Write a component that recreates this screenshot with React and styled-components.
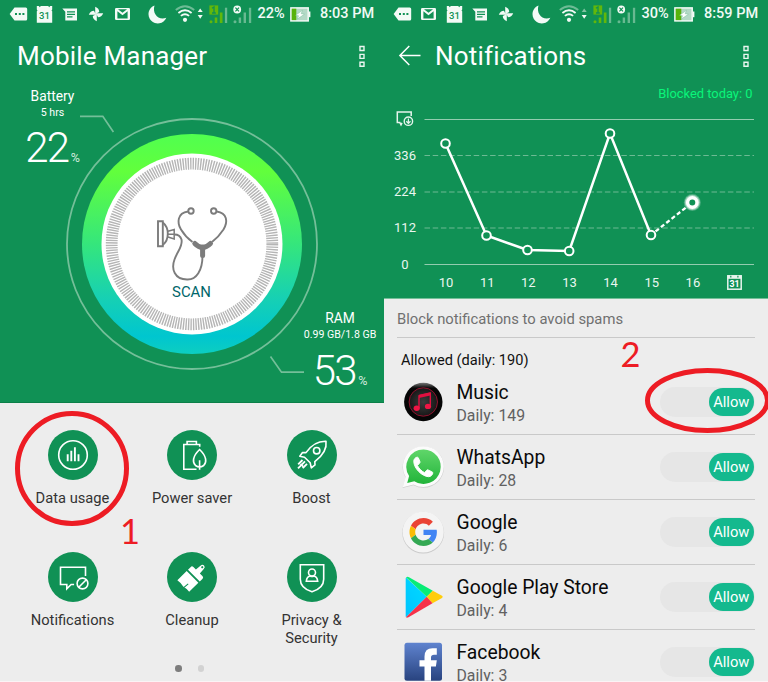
import React from "react";
import styled, { createGlobalStyle } from "styled-components";

const GREEN = "#109155";

const GlobalStyle = createGlobalStyle`
  * { box-sizing: border-box; }
  body { margin: 0; background: #ededed; font-family: Roboto, sans-serif; overflow: hidden; }
  svg { display: block; flex: none; overflow: visible; }
`;

const Page = styled.main`
  position: relative;
  display: grid;
  grid-template-columns: 384px 384px;
  width: 768px;
  height: 682px;
  overflow: hidden;
  background: #ededed;
  border-bottom: 1px solid #fbf3f5;
`;

const Phone = styled.section`
  display: flex;
  flex-direction: column;
  min-width: 0;
  height: 681px;
  overflow: hidden;
`;

const Header = styled.header`
  flex: none;
  height: ${(p) => p.$height}px;
  background: ${GREEN};
  color: #fff;
  border-bottom: 1px solid ${(p) => p.$edge};
`;

const StatusBar = styled.div`
  display: flex;
  align-items: center;
  height: 28px;
  padding: 0 0 0 6px;
  font-size: 14.5px;
  font-weight: 500;
  color: #f1faf5;
`;

const Tray = styled.div`
  display: flex;
  margin-right: 13px;
`;

const TraySlot = styled.span`
  display: flex;
  align-items: center;
  justify-content: center;
  width: 25.8px;
`;

const Radios = styled.div`
  display: flex;
  align-items: center;
  gap: 5.5px;
`;

const MoonSlot = styled.span`
  width: 22px;
`;

const StatusText = styled.span`
  white-space: nowrap;
  line-height: 28px;
  width: ${(p) => p.$width}px;
  margin-left: ${(p) => p.$gap}px;
`;

const TitleBar = styled.div`
  display: flex;
  align-items: center;
  height: 56px;
  padding: 0 19px 0 ${(p) => p.$left}px;
`;

const Title = styled.h1`
  flex: 1;
  margin: 0;
  font-size: 26px;
  font-weight: 400;
  line-height: 57px;
  letter-spacing: 0.2px;
`;

const BackSlot = styled.span`
  width: 36.5px;
`;

const Hero = styled.div`
  display: grid;
  height: 318px;
  & > * { grid-area: 1 / 1; }
`;

const Gauge = styled.div`
  display: flex;
  flex-direction: column;
  align-items: center;
  width: ${(p) => p.$width}px;
  height: 80px;
  justify-self: ${(p) => p.$side};
  align-self: ${(p) => p.$side};
  margin: ${(p) => p.$margin};
`;

const GaugeName = styled.div`
  font-size: 13.8px;
  line-height: 18px;
  white-space: nowrap;
`;

const GaugeNote = styled.div`
  font-size: 10.6px;
  line-height: 16px;
  white-space: nowrap;
`;

const GaugeValue = styled.div`
  display: flex;
  align-items: baseline;
  margin-top: ${(p) => p.$drop}px;
  font-size: 42px;
  font-weight: 300;
  line-height: 42px;
  letter-spacing: -1.8px;
`;

const Percent = styled.span`
  margin-left: 2.5px;
  font-size: 12.5px;
  font-weight: 400;
  letter-spacing: 0;
  color: #d3ecdf;
`;

const Tools = styled.nav`
  display: grid;
  grid-template-columns: repeat(3, 119.5px);
  grid-auto-rows: 122px;
  padding: 27px 0 0 12.75px;
`;

const Tool = styled.div`
  display: flex;
  flex-direction: column;
  align-items: center;
`;

const ToolDisc = styled.span`
  display: flex;
  align-items: center;
  justify-content: center;
  width: 50px;
  height: 50px;
  border-radius: 50%;
  background: ${GREEN};
`;

const ToolLabel = styled.span`
  margin-top: 10px;
  max-width: 100px;
  font-size: 14.7px;
  line-height: 17.6px;
  text-align: center;
  color: #333;
`;

const Pager = styled.div`
  display: flex;
  gap: 16px;
  padding: 0 0 0 175px;
  margin-top: -9px;
`;

const Dot = styled.i`
  width: 6.5px;
  height: 6.5px;
  border-radius: 50%;
  background: ${(p) => (p.$active ? "#7d7d7d" : "#d2d2d2")};
`;

const Blocked = styled.div`
  height: 20px;
  padding-right: 15.5px;
  text-align: right;
  font-size: 12.9px;
  line-height: 20px;
  color: #0af57a;
`;

const Chart = styled.div`
  display: grid;
  grid-template-columns: 40px 330px;
  margin-top: -3px;
`;

const YAxis = styled.div`
  display: flex;
  flex-direction: column;
  padding-left: 2px;
`;

const YTick = styled.span`
  display: flex;
  align-items: center;
  justify-content: center;
  height: 36.25px;
  font-size: 13px;
  color: #e9f6f0;
`;

const XAxis = styled.div`
  grid-column: 2;
  display: grid;
  grid-template-columns: repeat(8, 41.15px);
  align-items: center;
  justify-items: center;
  height: 20px;
  padding-left: 1.5px;
  margin-top: -9.5px;
  font-size: 13px;
  color: #e9f6f0;
`;

const Notice = styled.div`
  flex: none;
  height: 39px;
  margin: 0 13px;
  border-bottom: 1px solid #c9c9c9;
  font-size: 14.8px;
  line-height: 41px;
  color: #707070;
`;

const Subhead = styled.h2`
  flex: none;
  height: 32px;
  margin: 0 17px;
  font-size: 14.6px;
  font-weight: 400;
  line-height: 45px;
  color: #111;
`;

const AppRow = styled.div`
  flex: none;
  display: grid;
  grid-template-columns: 54px 1fr auto;
  align-items: center;
  height: 65px;
  margin: 0 13px;
  border-bottom: 1px solid #c9c9c9;
`;

const AppIcon = styled.span`
  padding-left: 5px;
`;

const AppText = styled.div`
  padding: 4px 0 0 5.5px;
`;

const AppName = styled.div`
  font-size: 19.3px;
  line-height: 24px;
  color: #0a0a0a;
`;

const AppDaily = styled.div`
  font-size: 15.8px;
  line-height: 22px;
  color: #616161;
`;

const Switch = styled.button`
  display: flex;
  align-items: center;
  justify-content: flex-end;
  width: 95px;
  height: 30px;
  padding: 0 1px 0 0;
  border: 0;
  border-radius: 15px;
  background: #e6e6e6;
`;

const SwitchThumb = styled.span`
  width: 45.5px;
  height: 28px;
  border-radius: 14px;
  background: #14b98e;
  font: 400 14.7px/29px Roboto, sans-serif;
  text-align: center;
  color: #fff;
`;

const Markup = styled.svg`
  position: absolute;
  inset: 0;
  pointer-events: none;
`;

/* ---------- status icons ---------- */

const TagIcon = () => (
  <svg width="19" height="14" viewBox="0 0 19 14">
    <path d="M5.500.5h11.200q1.500 0 1.500 1.500v10q0 1.500-1.500 1.500H5.500L.6 7z" fill="#f3faf6" />
    <path d="M6 6h2v2H6zM9.800 6h2v2h-2zM13.400 6h2v2h-2z" fill={GREEN} />
  </svg>
);

const CalendarIcon = () => (
  <svg width="17" height="18" viewBox="0 0 17 18">
    <path d="M.8 1h2l1 1.300L4.800 1h7.400l1 1.300L14.200 1h2v3.600l-.7.8.7.9V17.700H.8V6.300l.7-.9-.7-.8z" fill="#f3faf6" />
    <text x="8.500" y="13.800" textAnchor="middle" fontSize="9.500" fontWeight="500" fill={GREEN}>31</text>
  </svg>
);

const MessageIcon = () => (
  <svg width="16" height="13" viewBox="0 0 16 13">
    <path d="M.3.500H15V12.500H3.300V3.800z" fill="#f3faf6" />
    <path d="M5 3.800h8M5 6.300h8M5 8.800h5.500" stroke={GREEN} strokeWidth="1.200" />
  </svg>
);

const PinwheelIcon = () => (
  <svg width="16" height="16" viewBox="0 0 16 16">
    <g fill="#f3faf6">
      {[0, 90, 180, 270].map((a) => (
        <path key={a} transform={`rotate(${a} 8 8)`} d="M7.200 8V.8Q11.200 2.400 11.200 6L8.800 7.200 8 8z" />
      ))}
    </g>
  </svg>
);

const MailIcon = () => (
  <svg width="15" height="12" viewBox="0 0 15 12">
    <rect width="15" height="12" rx="1.200" fill="#f3faf6" />
    <path d="M2.400 10.500V3.200L7.500 7.200 12.600 3.200V10.500z" fill={GREEN} />
    <path d="M3 1.300h9L7.500 4.700z" fill={GREEN} />
  </svg>
);

const MoonIcon = () => (
  <svg width="19" height="18" viewBox="0 0 19 18">
    <path d="M6.500.4A9.300 9.300 0 1 0 18.300 12.800C10.500 16 4 8.500 6.500.4z" fill="#f3faf6" />
  </svg>
);

const WifiIcon = ({ up }) => (
  <svg width="28" height="18" viewBox="0 0 28 18">
    <g fill="none" strokeWidth="1.900">
      <path d="M.8 5Q10 -2.600 19.200 5" stroke="#6dbb95" />
      <path d="M3.400 7.900Q10 2.600 16.600 7.900M5.900 10.900Q10 7.400 14.100 10.900" stroke="#f3faf6" />
    </g>
    <circle cx="10" cy="14.800" r="2.100" fill="#f3faf6" />
    <path d="M22.700 7l2.500-3.600L27.700 7z" fill={up ? "#f3faf6" : "#7fc3a1"} />
    <path d="M22.700 10l2.500 3.800 2.500-3.800z" fill="#f3faf6" />
  </svg>
);

const SimOneIcon = () => (
  <svg width="19" height="19" viewBox="0 0 19 19">
    <path d="M.4.4h8.800V9.600H.4z" fill="#62b70b" />
    <path d="M3 3.200l2-1.200v6M3 8h3.800" stroke={GREEN} strokeWidth="1.300" fill="none" />
    <path d="M5.700 12.500h2.600V18H5.700zM10.800 7.500h2.700V18h-2.700z" fill="#62b70b" />
    <circle cx="2" cy="16.700" r="1.500" fill="#62b70b" />
    <path d="M15.900 2.700h2.300V18h-2.300z" fill="#68b991" />
  </svg>
);

const SimTwoIcon = () => (
  <svg width="19" height="19" viewBox="0 0 19 19">
    <g fill="#68b991">
      <circle cx="2" cy="16.700" r="1.500" />
      <path d="M5.700 12.500h2.400V18H5.700zM10.600 7.500H13V18h-2.400zM15.900 2.700h2.300V18h-2.300z" />
    </g>
    <circle cx="4.200" cy="4.500" r="3.900" fill="#f3faf6" />
    <path d="M2.400 2.700L6 6.300M6 2.700L2.400 6.300" stroke={GREEN} strokeWidth="1.200" />
  </svg>
);

const BatteryIcon = ({ level }) => (
  <svg width="21" height="15" viewBox="0 0 21 15">
    <rect x=".9" y=".9" width="17.300" height="13" fill="#b4d9c6" stroke="#f3faf6" strokeWidth="1.500" />
    <rect x="1.700" y="1.700" width={level} height="11.400" fill="#58b30c" />
    <path d="M18.800 4.500h1.600v5.700h-1.600z" fill="#f3faf6" />
    <path d="M12.500 3.300L5.600 8.300l3 .5-1.400 3.300 7.200-4.900-3.300-.5z" fill="#fff" stroke="#68b991" strokeWidth=".4" />
  </svg>
);

const TRAY = { tag: TagIcon, calendar: CalendarIcon, message: MessageIcon, pinwheel: PinwheelIcon, mail: MailIcon };

function Status({ tray, charge, level, time, up }) {
  return (
    <StatusBar>
      <Tray>
        {tray.map((name) => {
          const Icon = TRAY[name];
          return <TraySlot key={name}><Icon /></TraySlot>;
        })}
      </Tray>
      <Radios>
        <MoonSlot><MoonIcon /></MoonSlot>
        <WifiIcon up={up} />
        <SimOneIcon />
        <SimTwoIcon />
      </Radios>
      <StatusText $gap={5} $width={33}>{charge}</StatusText>
      <BatteryIcon level={level} />
      <StatusText $gap={8.5} $width={57}>{time}</StatusText>
    </StatusBar>
  );
}

const MoreIcon = () => (
  <svg width="6" height="23" viewBox="0 0 6 23">
    <path d="M1 1.500h4v4H1zM1 9.400h4v4H1zM1 17.300h4v4H1z" fill="none" stroke="#eaf6f0" strokeWidth="1.400" />
  </svg>
);

const BackIcon = () => (
  <svg width="22" height="20" viewBox="0 0 22 20">
    <path d="M10.300 0L.9 9.500l9.400 9.500M1 9.500h20.500" fill="none" stroke="#fff" strokeWidth="1.500" />
  </svg>
);

/* ---------- dial ---------- */

const Dial = () => (
  <svg width="384" height="318" viewBox="0 84 384 318">
    <defs>
      <linearGradient id="ring" x1="0" y1="134" x2="0" y2="354" gradientUnits="userSpaceOnUse">
        <stop offset="0" stopColor="#50ff50" />
        <stop offset=".17" stopColor="#62ff3c" />
        <stop offset=".5" stopColor="#35e67c" />
        <stop offset=".75" stopColor="#16d0b4" />
        <stop offset=".92" stopColor="#00c6cf" />
        <stop offset="1" stopColor="#0dcec0" />
      </linearGradient>
    </defs>
    <circle cx="192" cy="244" r="125" fill="none" stroke="#74bf99" strokeWidth="1.800" />
    <circle cx="192" cy="244" r="110" fill="url(#ring)" />
    <circle cx="192" cy="244" r="90.500" fill="#fff" />
    <circle cx="192" cy="244" r="80.300" fill="none" stroke="#b5b5b5" strokeWidth="11.800" strokeDasharray="1.400 1.1227" />
    <path d="M80 116.300h22.800l10.600 15.700M270.500 356.500l11 15.700H304" fill="none" stroke="#74bf99" strokeWidth="1.700" />
    <g fill="none" stroke="#7c7c7c" strokeWidth="1.900">
      <circle cx="191" cy="211" r="2.700" />
      <circle cx="213.700" cy="211" r="2.700" />
      <path d="M188 211.500C177 213 177 223 181 229.500Q185.500 237 192.500 242M216.700 211.500C227.500 213 228 222 223.500 229.500Q219 236.500 212 242" />
      <path d="M202.500 256C202.500 270 196.500 280 187 279.500C174.500 279.500 171 269 174.500 259.500C178 250 183 246.500 181.500 239.500Q180 234.500 174.500 234.500" />
      <path d="M158 221.200h4.800v25H158z" />
      <path d="M162.800 222.500Q167.800 226.500 167.800 233.700T162.800 245" />
      <path d="M168 231.200l6.200-1.700v9.500l-6.200-2M168 234.200h6" strokeWidth="1.500" />
    </g>
    <path d="M194.800 243.500Q202.500 251.500 210.500 243.500" fill="none" stroke="#7c7c7c" strokeWidth="5" strokeLinecap="round" />
    <path d="M202.600 247v8.500" stroke="#7c7c7c" strokeWidth="5" strokeLinecap="round" />
    <text x="191.500" y="297" textAnchor="middle" fontSize="14.900" fill="#00666a">SCAN</text>
  </svg>
);

/* ---------- tool icons ---------- */

const toolStroke = { fill: "none", stroke: "#fff", strokeWidth: 1.6 };

const ToolSvg = ({ children }) => (
  <svg width="50" height="50" viewBox="0 0 50 50">{children}</svg>
);

const DataGlyph = () => (
  <ToolSvg>
    <circle cx="25" cy="25" r="14.300" {...toolStroke} />
    <path d="M19.700 31.300v-7M23.300 31.300v-10.500M26.900 31.300v-14M30.500 31.300v-7" {...toolStroke} strokeWidth="1.900" />
  </ToolSvg>
);

const PowerGlyph = () => (
  <ToolSvg>
    <path d="M29.500 39.200H16.800V14.500h3.300v-3h9.300v3h3.300v2.300M20 14.500h9.500" {...toolStroke} />
    <path d="M32.600 19.500C25.300 26.500 25.300 32.500 28.500 35.500Q32.600 38.300 36.700 35.500C39.900 32.500 39.900 26.500 32.600 19.500zM32.600 39.800v-9.500" {...toolStroke} />
  </ToolSvg>
);

const BoostGlyph = () => (
  <ToolSvg>
    <path d="M39 11.200C40 18 36 25.500 27.800 31.700L28 34.800 24.300 37.800 23.200 32.800 17.500 27.200 12.800 26.200 15.500 22.500 19 22.600C24.500 14.500 31 11 39 11.200z" {...toolStroke} strokeLinejoin="round" />
    <circle cx="29.700" cy="20.700" r="3.200" {...toolStroke} />
    <path d="M15.500 30l-4.300 4.300M18 31.300l-7 7M20 33.800l-4.300 4.300" {...toolStroke} strokeWidth="1.900" />
    <path d="M13.600 34l2.600 2.600" {...toolStroke} />
  </ToolSvg>
);

const NotifyGlyph = () => (
  <ToolSvg>
    <path d="M37.500 24V15.300H12.500V32.500h6.300v4.300l4.300-4.300h3" {...toolStroke} />
    <circle cx="34.500" cy="31.500" r="5.400" {...toolStroke} />
    <path d="M31 35l7-7" {...toolStroke} />
  </ToolSvg>
);

const CleanGlyph = () => (
  <ToolSvg>
    <g transform="rotate(45 25 25)" fill="#fff">
      <path d="M17 24.500h16.500v13q-4-.6-8 .5-5-1-8.500-.3z" />
      <path d="M17 18.700q0-1.700 2-1.700h3.500l.5-6q0-2.700 2.300-2.700t2.300 2.700l.5 6h3.600q2 0 2 1.700v4H17z" />
      <circle cx="25.300" cy="10.800" r="1.100" fill={GREEN} />
      <path d="M26.700 38l.4-5.500" stroke={GREEN} strokeWidth="1" />
    </g>
  </ToolSvg>
);

const PrivacyGlyph = () => (
  <ToolSvg>
    <path d="M13.300 12.800h23.400v14.500q0 9-11.700 12.500-11.700-3.500-11.700-12.500z" {...toolStroke} />
    <circle cx="25" cy="20.500" r="3.500" {...toolStroke} />
    <path d="M19.300 29.300q.5-5 4-5.300 1.700 1.100 3.400 0 3.500.3 4 5.300z" {...toolStroke} />
  </ToolSvg>
);

const TOOLS = [
  ["Data usage", DataGlyph],
  ["Power saver", PowerGlyph],
  ["Boost", BoostGlyph],
  ["Notifications", NotifyGlyph],
  ["Cleanup", CleanGlyph],
  ["Privacy & Security", PrivacyGlyph],
];

/* ---------- notifications chart ---------- */

const POINTS = [[445.5, 143.5], [486.5, 235.5], [527.5, 250], [569.2, 251], [610, 133.5], [651, 235]];

const Plot = () => (
  <svg width="330" height="165" viewBox="424 101 330 165">
    <path d="M424.500 119.500H754M424.500 264.500H754" stroke="#93ccaf" strokeWidth="1.100" />
    <path d="M424.500 155.500H754M424.500 192H754M424.500 228H754" stroke="#6dba93" strokeWidth="1.100" strokeDasharray="5.500 2.700" />
    <polyline points={POINTS.map((p) => p.join(",")).join(" ")} fill="none" stroke="#fff" strokeWidth="2.500" />
    <path d="M651 235L692.300 202.500" stroke="#fff" strokeWidth="2.300" strokeDasharray="4.200 2.600" strokeDashoffset="1" />
    {POINTS.map(([x, y]) => (
      <circle key={x} cx={x} cy={y} r="4.300" fill={GREEN} stroke="#fff" strokeWidth="2" />
    ))}
    <circle cx="692.300" cy="202.500" r="8.500" fill="#fff" opacity=".25" />
    <circle cx="692.300" cy="202.500" r="7.500" fill="#fff" opacity=".5" />
    <circle cx="692.300" cy="202.500" r="4.700" fill={GREEN} stroke="#fff" strokeWidth="3.400" />
  </svg>
);

const InboxIcon = () => (
  <svg width="18" height="16" viewBox="0 0 18 16">
    <path d="M15.200 5V1H1.300v10.500h2.500l1.200 2.300 1-2" fill="none" stroke="#e6f4ed" strokeWidth="1.500" />
    <circle cx="12.400" cy="10.200" r="4.200" fill="none" stroke="#e6f4ed" strokeWidth="1.400" />
    <path d="M12.400 7.500v4.500M10.300 10.300l2.100 2 2.100-2" fill="none" stroke="#e6f4ed" strokeWidth="1.200" />
  </svg>
);

const DayIcon = () => (
  <svg width="15" height="15" viewBox="0 0 15 15">
    <rect x=".8" y=".8" width="13.400" height="13.400" fill="none" stroke="#e6f4ed" strokeWidth="1.500" />
    <path d="M.5.5h14v3.300H.5z" fill="#e6f4ed" />
    <path d="M3.800.8v1.600M10.900.8v1.600" stroke={GREEN} strokeWidth="1.200" />
    <text x="7.500" y="12" textAnchor="middle" fontSize="8.800" fontWeight="700" fill="#fff">31</text>
  </svg>
);

/* ---------- application icons ---------- */

const MusicLogo = () => (
  <svg width="43" height="43" viewBox="0 0 43 43">
    <defs>
      <radialGradient id="disc"><stop offset="0" stopColor="#3d3d3d" /><stop offset="1" stopColor="#171717" /></radialGradient>
      <linearGradient id="rim" x2="0" y2="1"><stop offset="0" stopColor="#777" /><stop offset=".14" stopColor="#050505" /></linearGradient>
    </defs>
    <circle cx="21.300" cy="21" r="19.200" fill="url(#rim)" />
    <circle cx="21.300" cy="21" r="14.200" fill="url(#disc)" stroke="#9d1230" strokeWidth=".9" />
    <path d="M17 27V14.800l11.300-2.600v12.400" fill="none" stroke="#e01040" strokeWidth="1.400" />
    <path d="M17 13.800l11.300-2.600v3.200L17 17z" fill="#e01040" />
    <ellipse cx="14.700" cy="27.300" rx="3.100" ry="2.700" fill="#f01545" />
    <ellipse cx="26" cy="25.400" rx="3.100" ry="2.700" fill="#f01545" />
  </svg>
);

const WhatsAppLogo = () => (
  <svg width="43" height="43" viewBox="0 0 43 43">
    <defs><linearGradient id="wa" x2="0" y2="1"><stop offset="0" stopColor="#60d66a" /><stop offset="1" stopColor="#22b43a" /></linearGradient></defs>
    <path d="M21.500.5A20.600 20.600 0 0 1 21.500 41.700Q16 41.700 11.500 39.200L.6 42 3.500 31.500A20.600 20.600 0 0 1 21.500.5z" fill="#cfcfcf" />
    <path d="M21.500.3A20.300 20.300 0 0 1 21.500 40.900Q16 40.900 11.500 38.400L.7 41.200 3.600 30.700A20.300 20.300 0 0 1 21.500.3z" fill="#fbfbfb" />
    <path d="M21.500 3.500A17.200 17.200 0 1 1 12.300 35.200L5.200 37.100 7.100 30A17.200 17.200 0 0 1 21.500 3.500z" fill="url(#wa)" />
    <path transform="translate(8.300 7.700) scale(1.080)" strokeLinejoin="round" stroke="#fff" strokeWidth=".9" d="M6.620 11c1.440 2.830 3.760 5.140 6.590 6.590l2-2.200c.5-.5.9-.5 1.300-.3l3.400 1.600c.8.400.9.600.9 1.300-.2 1.700-2 3.300-4 3.300C10.500 20.700 3.600 14 3.200 7.200c0-2 1.300-3.700 2.900-3.900.7-.1 1.100 0 1.400.7l1.400 3.300c.2.500.1.800-.3 1.300z" fill="#fff" />
  </svg>
);

const GoogleLogo = () => (
  <svg width="43" height="43" viewBox="0 0 43 43">
    <circle cx="21.200" cy="21.700" r="20.900" fill="#c9c9c9" />
    <circle cx="21.200" cy="21" r="20.600" fill="#f4f4f4" />
    <g transform="translate(7.500 7) scale(.583)">
      <path fill="#ea4335" d="M24 9.500c3.540 0 6.710 1.220 9.210 3.600l6.850-6.850C35.900 2.380 30.470 0 24 0 14.620 0 6.510 5.380 2.560 13.220l7.980 6.190C12.430 13.720 17.740 9.500 24 9.500z" />
      <path fill="#4285f4" d="M46.980 24.550c0-1.570-.15-3.090-.38-4.550H24v9.020h12.940c-.58 2.960-2.260 5.480-4.780 7.180l7.730 6c4.510-4.180 7.090-10.360 7.090-17.650z" />
      <path fill="#fbbc05" d="M10.530 28.590c-.48-1.450-.76-2.990-.76-4.590s.27-3.140.76-4.590l-7.980-6.190C.92 16.460 0 20.120 0 24c0 3.880.92 7.540 2.560 10.780l7.970-6.190z" />
      <path fill="#34a853" d="M24 48c6.480 0 11.930-2.130 15.890-5.810l-7.730-6c-2.150 1.450-4.920 2.300-8.160 2.300-6.260 0-11.570-4.220-13.470-9.910l-7.980 6.190C6.510 42.620 14.620 48 24 48z" />
    </g>
  </svg>
);

const PlayLogo = () => (
  <svg width="43" height="43" viewBox="0 0 43 43">
    <defs><linearGradient id="play" x1="1" x2="0" y2="1"><stop offset="0" stopColor="#00dcff" /><stop offset="1" stopColor="#00c4ff" /></linearGradient></defs>
    <path d="M4 1.500L24.700 20.800 4 41.300Q3.700 41 3.700 40V2.500z" fill="url(#play)" />
    <path d="M4 1.300Q5.500.3 7 1.200L30.800 14.700 24.700 20.800z" fill="#08ec76" />
    <path d="M30.800 14.700L40 19.800Q41.500 20.900 40 22L30.500 27.300 24.700 20.800z" fill="#ffcd0b" />
    <path d="M24.700 20.800L30.500 27.300 6.500 41.200Q5 42 4 41.300z" fill="#f7324a" />
  </svg>
);

const FacebookLogo = () => (
  <svg width="43" height="43" viewBox="0 0 43 43">
    <defs><linearGradient id="fb" x2="0" y2="1"><stop offset="0" stopColor="#5f83cf" /><stop offset="1" stopColor="#28437f" /></linearGradient></defs>
    <rect x="2.500" y="1.800" width="37.500" height="38" rx="2.500" fill="url(#fb)" />
    <path d="M22.500 39.800V25.600h-5V19.200h5V15.500q0-8.300 8-8.300h4.300v6.500h-2.800q-3 0-3 2.800v2.700h5.800l-.9 6.400h-4.900v14.200z" fill="#fff" />
  </svg>
);

const APPS = [
  ["Music", 149, MusicLogo],
  ["WhatsApp", 28, WhatsAppLogo],
  ["Google", 6, GoogleLogo],
  ["Google Play Store", 4, PlayLogo],
  ["Facebook", 3, FacebookLogo],
];

/* ---------- screens ---------- */

function ManagerScreen() {
  return (
    <Phone>
      <Header $height={403} $edge="#0b8048">
        <Status tray={["tag", "calendar", "message", "pinwheel", "mail"]} charge="22%" level={4.6} time="8:03 PM" up />
        <TitleBar $left={17}>
          <Title>Mobile Manager</Title>
          <MoreIcon />
        </TitleBar>
        <Hero>
          <Dial />
          <Gauge $side="start" $width={56} $margin="3px 0 0 24.500px">
            <GaugeName>Battery</GaugeName>
            <GaugeNote>5 hrs</GaugeNote>
            <GaugeValue $drop={6}>22<Percent>%</Percent></GaugeValue>
          </Gauge>
          <Gauge $side="end" $width={72} $margin="0 8px 13px 0">
            <GaugeName>RAM</GaugeName>
            <GaugeNote>0.99 GB/1.8 GB</GaugeNote>
            <GaugeValue $drop={7}>53<Percent>%</Percent></GaugeValue>
          </Gauge>
        </Hero>
      </Header>
      <Tools>
        {TOOLS.map(([label, Glyph]) => (
          <Tool key={label}>
            <ToolDisc><Glyph /></ToolDisc>
            <ToolLabel>{label}</ToolLabel>
          </Tool>
        ))}
      </Tools>
      <Pager><Dot $active /><Dot /></Pager>
    </Phone>
  );
}

function NotificationsScreen() {
  return (
    <Phone>
      <Header $height={299} $edge="#74be98">
        <Status tray={["tag", "mail", "calendar", "message", "pinwheel"]} charge="30%" level={5.6} time="8:59 PM" />
        <TitleBar $left={14.5}>
          <BackSlot><BackIcon /></BackSlot>
          <Title>Notifications</Title>
          <MoreIcon />
        </TitleBar>
        <Blocked>Blocked today: 0</Blocked>
        <Chart>
          <YAxis>
            <YTick><InboxIcon /></YTick>
            {[336, 224, 112, 0].map((v) => <YTick key={v}>{v}</YTick>)}
          </YAxis>
          <Plot />
          <XAxis>
            {[10, 11, 12, 13, 14, 15, 16].map((d) => <span key={d}>{d}</span>)}
            <DayIcon />
          </XAxis>
        </Chart>
      </Header>
      <Notice>Block notifications to avoid spams</Notice>
      <Subhead>Allowed (daily: 190)</Subhead>
      {APPS.map(([name, count, Logo]) => (
        <AppRow key={name}>
          <AppIcon><Logo /></AppIcon>
          <AppText>
            <AppName>{name}</AppName>
            <AppDaily>Daily: {count}</AppDaily>
          </AppText>
          <Switch><SwitchThumb>Allow</SwitchThumb></Switch>
        </AppRow>
      ))}
    </Phone>
  );
}

export default function App() {
  return (
    <>
      <GlobalStyle />
      <Page>
        <ManagerScreen />
        <NotificationsScreen />
        <Markup width="768" height="682" viewBox="0 0 768 682">
          <g fill="none" stroke="#ed1c24" strokeWidth="5">
            <ellipse cx="72" cy="468.500" rx="54.500" ry="55" />
            <ellipse cx="707.500" cy="400.500" rx="60" ry="30" />
          </g>
          <g fill="#ed1c24" fontFamily="Lato, sans-serif" fontSize="34.500">
            <text x="120" y="544">1</text>
            <text x="620.500" y="367">2</text>
          </g>
        </Markup>
      </Page>
    </>
  );
}
